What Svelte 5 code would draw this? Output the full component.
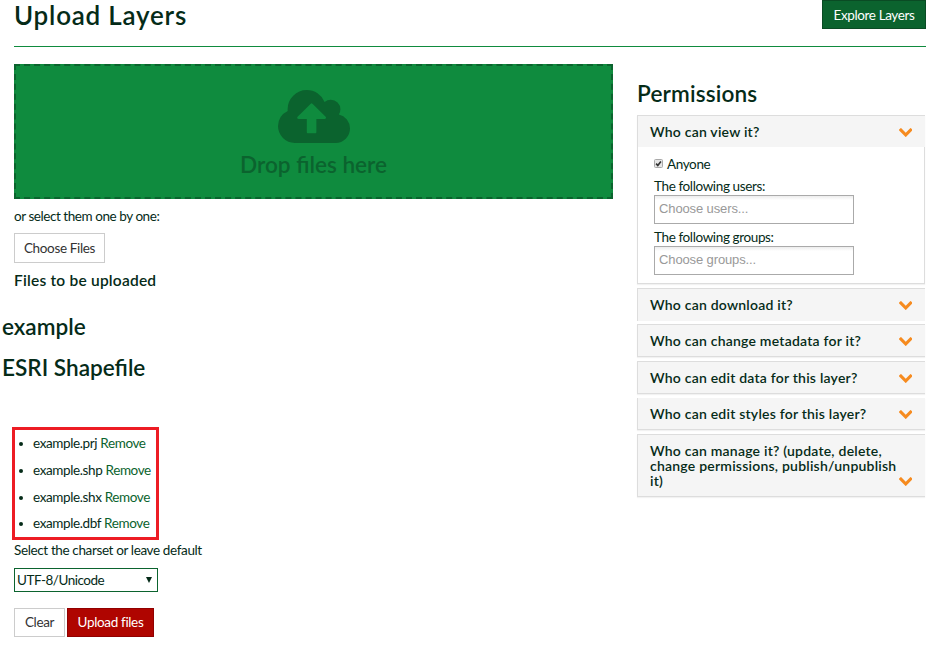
<script>
  const files = ['example.prj', 'example.shp', 'example.shx', 'example.dbf'];
  const panels = [
    { title: 'Who can download it?', h: 33, gap: 3, open: true },
    { title: 'Who can change metadata for it?', h: 33, gap: 4 },
    { title: 'Who can edit data for this layer?', h: 33, gap: 4 },
    { title: 'Who can edit styles for this layer?', h: 32, gap: 4, flat: true },
    { title: 'Who can manage it? (update, delete, change permissions, publish/unpublish it)', h: 63, gap: 0 }
  ];
</script>

{#snippet chevron()}
  <svg class="chevron" viewBox="90 533 1612 1035" preserveAspectRatio="none" aria-hidden="true">
    <path d="M1683 808l-742 741q-19 19-45 19t-45-19l-742-741q-19-19-19-45.5t19-45.5l166-165q19-19 45-19t45 19l531 531 531-531q19-19 45-19t45 19l166 165q19 19 19 45.5t-19 45.5z" />
  </svg>
{/snippet}

<main>
  <header>
    <h1>Upload Layers</h1>
    <a class="explore" href="#layers">Explore Layers</a>
  </header>

  <div class="columns">
    <section class="left">
      <div class="drop">
        <svg class="cloud" viewBox="-64 128 1920 1408" aria-hidden="true">
          <path d="M1216 864q0-14-9-23l-352-352q-9-9-23-9t-23 9l-351 351q-10 12-10 24 0 14 9 23t23 9h224v352q0 13 9.5 22.5t22.5 9.5h192q13 0 22.5-9.5t9.5-22.5v-352h224q13 0 22.5-9.5t9.5-22.5zm640 288q0 159-112.5 271.5t-271.5 112.5h-1088q-185 0-316.5-131.5t-131.5-316.5q0-130 70-240t188-165q-2-30-2-43 0-212 150-362t362-150q156 0 285.5 87t188.5 231q71-62 166-62 106 0 181 75t75 181q0 76-41 138 130 31 213.5 135.5t83.5 238.5z" />
        </svg>
        <h3>Drop files here</h3>
      </div>
      <p class="hint">or select them one by one:</p>
      <button class="plain choose">Choose Files</button>
      <h4>Files to be uploaded</h4>
      <h3 class="name">example</h3>
      <h3 class="type">ESRI Shapefile</h3>
      <ul>
        {#each files as file}
          <li><span class="file">{file}</span> <a href="#remove">Remove</a></li>
        {/each}
      </ul>
      <p class="charset">Select the charset or leave default</p>
      <div class="select"><span>UTF-8/Unicode</span><i></i></div>
      <div class="actions">
        <button class="plain clear">Clear</button>
        <button class="upload">Upload files</button>
      </div>
    </section>

    <aside>
      <h3 class="perm">Permissions</h3>
      <div class="panel view">
        <div class="head first"><span>Who can view it?</span>{@render chevron()}</div>
        <div class="body">
          <div class="check">
            <svg viewBox="0 0 9 9" aria-hidden="true">
              <rect x=".5" y=".5" width="8" height="8" rx="1" fill="#e6e6e6" stroke="#a9a9a9" />
              <path d="M2.1 4.6 3.8 6.4 6.9 2.4" fill="none" stroke="#333" stroke-width="1.6" />
            </svg>
            <span>Anyone</span>
          </div>
          <div class="label">The following users:</div>
          <div class="input"><span class="users">Choose users...</span></div>
          <div class="label second">The following groups:</div>
          <div class="input"><span class="groups">Choose groups...</span></div>
        </div>
      </div>
      {#each panels as p}
        <div class="panel head" class:open={p.open} class:flat={p.flat} style:height="{p.h}px" style:margin-bottom="{p.gap}px">
          <span>{p.title}</span>{@render chevron()}
        </div>
      {/each}
    </aside>
  </div>
</main>

<style>
  :global(body) { margin: 0; background: #fff; }
  main { box-sizing: border-box; width: 938px; height: 645px; padding: 0 12px 0 14px; font: 13.5px/20px Lato, sans-serif; letter-spacing: -.38px; color: #052b18; }
  main * { box-sizing: border-box; }
  h1, h3, h4, p, ul { margin: 0; padding: 0; font-weight: 600; }
  h1, h3 { font-size: 22.6px; line-height: 30px; letter-spacing: 0; white-space: nowrap; }
  h1 { font-size: 26px; line-height: 31px; letter-spacing: .78px; }
  header { display: flex; justify-content: space-between; align-items: flex-start; height: 47px; border-bottom: 1px solid #0f8b3e; }
  .explore { width: 104px; height: 29px; border: 1px solid #0a4b24; background: #0b632e; color: #fff; text-align: center; line-height: 28px; text-decoration: none; white-space: nowrap; }
  .columns { display: flex; padding-top: 17px; }
  .left { width: 599px; margin-right: 24px; }
  .drop { height: 135px; border: 2px dashed #0b632e; background: #0f8b3e; color: #0b632e; display: flex; flex-direction: column; align-items: center; padding-top: 24px; }
  .cloud { display: block; width: 72px; height: 53px; fill: #0b632e; flex: none; }
  .drop h3 { margin-top: 7px; }
  p { font-weight: 400; white-space: nowrap; }
  .hint { margin-top: 7px; letter-spacing: -.44px; }
  button { font: 13.5px/20px Lato, sans-serif; letter-spacing: -.35px; padding: 0; border-radius: 0; white-space: nowrap; }
  .plain { display: block; border: 1px solid #ccc; background: #fff; color: #333; }
  .choose { width: 91px; height: 30px; margin-top: 7px; }
  h4 { font-size: 15.5px; line-height: 20px; margin-top: 7px; letter-spacing: .22px; }
  .name { margin: 22px 0 0 -12px; }
  .type { margin: 11px 0 0 -12px; }
  ul { width: 147px; height: 113px; margin: 44px 0 0 -2px; border: 3px solid #ed1c24; padding: 3px 0 0 18px; list-style: none; font-weight: 400; }
  li { position: relative; height: 26.8px; line-height: 20px; white-space: nowrap; }
  li::before { content: ''; position: absolute; left: -14px; top: 9px; width: 4px; height: 4px; border-radius: 50%; background: #052b18; }
  li a { color: #0b632e; text-decoration: none; }
  .charset { letter-spacing: -.37px; }
  .select { display: flex; align-items: center; justify-content: space-between; width: 144px; height: 24px; margin-top: 8px; padding: 0 5px 0 2px; border: 1px solid #0b632e; letter-spacing: -.48px; }
  .select i { border: 3.5px solid transparent; border-top: 6px solid #052b18; border-bottom: 0; margin-bottom: 1px; }
  .actions { display: flex; gap: 2px; margin-top: 16px; }
  .clear, .upload { height: 29px; padding-bottom: 2px; }
  .clear { width: 51px; }
  .upload { width: 87px; border: 1px solid #910000; background: #af0500; color: #fff; }
  aside { width: 288px; padding-top: 15px; }
  .perm { margin-bottom: 6px; letter-spacing: .15px; }
  .panel { border: 1px solid #ddd; box-shadow: 0 1px 1px rgba(0,0,0,.05); }
  .head { display: flex; position: relative; background: #f5f5f5; padding: 8px 13px 0 12px; font-size: 14px; line-height: 15px; font-weight: 600; letter-spacing: .22px; border-right: 0; }
  .head span { width: 250px; }
  .chevron { position: absolute; right: 13px; bottom: 10px; width: 13.5px; height: 9px; fill: #f68b1f; }
  .first { height: 31px; margin-right: -1px; }
  .view { width: 288px; height: 169px; margin-bottom: 4px; }
  .open { border-bottom: 0; box-shadow: none; }
  .open .chevron { bottom: 11px; }
  .flat { border-top: 0; }
  .body { padding: 7px 0 0 16px; }
  .check { display: flex; align-items: center; gap: 4px; height: 20px; }
  .check svg { width: 9px; height: 9px; margin-top: -2px; }
  .label { height: 20px; margin-top: 2px; }
  .second { margin-top: 3px; }
  .input { width: 200px; height: 29px; margin-top: -1px; border: 1px solid #aaa; background: linear-gradient(#eee 1%, #fff 15%); padding: 3px 4px; color: #999; font: 13px/20px "Liberation Sans", sans-serif; letter-spacing: -.12px; }
</style>
